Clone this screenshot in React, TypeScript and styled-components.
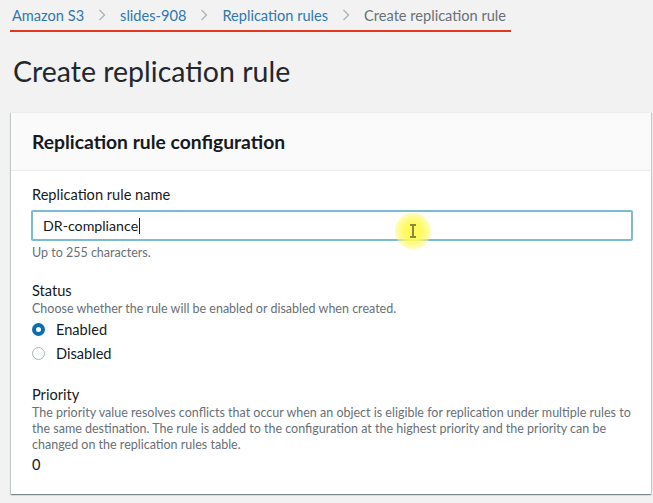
import React from "react";
import styled, { createGlobalStyle } from "styled-components";

const Global = createGlobalStyle`
  html, body { margin: 0; padding: 0; background: #f2f2f2; }
  body { font-family: Lato, "Liberation Sans", sans-serif; color: #16191f; }
  * { box-sizing: border-box; }
`;

const Page = styled.div`
  width: 653px;
  height: 503px;
  overflow: hidden;
  background: #f2f2f2;
  padding: 0 2px 0 11px;
  display: flex;
  flex-direction: column;
`;

const Crumbs = styled.nav`
  display: flex;
  align-items: center;
  height: 32px;
  padding: 0 0 0 2px;
  font-size: 14.6px;
  width: 501px;
  margin-left: -1px;
  border-bottom: 2px solid #e5361e;
`;

const CrumbLink = styled.span<{ $current?: boolean }>`
  flex-shrink: 0;
  color: ${(p) => (p.$current ? "#687078" : "#2f78b1")};
  white-space: nowrap;
`;

const Sep = styled.span`
  flex-shrink: 0;
  display: inline-flex;
  width: 36px;
  justify-content: center;
`;

const Title = styled.h1`
  margin: 22px 0 0 2px;
  font-size: 28.5px;
  font-weight: 400;
  color: #22272d;
  line-height: 34px;
`;

const Card = styled.section`
  margin-top: 24px;
  width: 640px;
  height: 382px;
  flex-shrink: 0;
  background: #fff;
  box-shadow: 0 1px 1px 0 rgba(0, 28, 36, 0.3), 1px 1px 1px 0 rgba(0, 28, 36, 0.15),
    -1px 1px 1px 0 rgba(0, 28, 36, 0.15);
  border-top: 1px solid #eaeded;
  display: flex;
  flex-direction: column;
`;

const CardHeader = styled.header`
  background: #fafafa;
  border-bottom: 1px solid #eaeded;
  height: 58px;
  flex-shrink: 0;
  padding: 0 0 0 21px;
  display: flex;
  align-items: center;
  font-size: 19.3px;
  font-weight: 700;
  color: #16191f;
`;

const CardBody = styled.div`
  padding: 14px 18px 0 21px;
  display: flex;
  flex-direction: column;
`;

const Field = styled.div<{ $gap?: number }>`
  display: flex;
  flex-direction: column;
  margin-bottom: ${(p) => p.$gap ?? 0}px;
`;

const Label = styled.div`
  font-size: 14.6px;
  line-height: 20px;
  color: #16191f;
`;

const Desc = styled.div`
  font-size: 12.5px;
  line-height: 16px;
  color: #687078;
`;

const InputBox = styled.div`
  position: relative;
  margin: 5px 0 0 -1px;
  height: 31px;
  border: 2px solid #7cbcd3;
  border-radius: 2px;
  padding: 0 10px;
  display: flex;
  align-items: center;
  font-size: 14.2px;
  color: #16191f;
  background: #fff;
`;

const Caret = styled.span`
  display: inline-block;
  width: 1px;
  height: 16px;
  background: #16191f;
  margin-left: 1px;
`;

const Highlight = styled.div`
  position: absolute;
  left: 362px;
  top: 1px;
  width: 36px;
  height: 36px;
  border-radius: 50%;
  background: radial-gradient(circle, rgba(255, 250, 90, 0.95) 35%, rgba(255, 250, 120, 0.5) 70%, rgba(255, 255, 160, 0) 100%);
  display: flex;
  align-items: center;
  justify-content: center;
`;

const Hint = styled(Desc)`
  margin-top: 4px;
`;

const RadioRow = styled.label`
  display: flex;
  align-items: center;
  gap: 11px;
  height: 24px;
  font-size: 14.6px;
  color: #16191f;
`;

const RadioDot = styled.span<{ $on?: boolean }>`
  width: 13px;
  height: 13px;
  border-radius: 50%;
  border: ${(p) => (p.$on ? "4px solid #0a6fb0" : "1.5px solid #aab7b8")};
  background: #fff;
`;

const Value = styled.div`
  margin-top: 2px;
  font-size: 14.6px;
  line-height: 20px;
  color: #16191f;
`;

const Chevron = () => (
  <svg width="8" height="12" viewBox="0 0 8 12">
    <path d="M1.5 1l5 5-5 5" fill="none" stroke="#aab7b8" strokeWidth="1.4" />
  </svg>
);

export default function App() {
  return (
    <>
      <Global />
      <Page>
        <Crumbs>
          <CrumbLink>Amazon S3</CrumbLink>
          <Sep>
            <Chevron />
          </Sep>
          <CrumbLink>slides-908</CrumbLink>
          <Sep>
            <Chevron />
          </Sep>
          <CrumbLink>Replication rules</CrumbLink>
          <Sep>
            <Chevron />
          </Sep>
          <CrumbLink $current>Create replication rule</CrumbLink>
        </Crumbs>
        <Title>Create replication rule</Title>
        <Card>
          <CardHeader>Replication rule configuration</CardHeader>
          <CardBody>
            <Field $gap={20}>
              <Label>Replication rule name</Label>
              <InputBox>
                DR-compliance
                <Caret />
                <Highlight>
                  <svg width="8" height="14" viewBox="0 0 8 14">
                    <path d="M1 1h6M4 1v12M1 13h6" fill="none" stroke="#8a8a3a" strokeWidth="2" />
                  </svg>
                </Highlight>
              </InputBox>
              <Hint>Up to 255 characters.</Hint>
            </Field>
            <Field $gap={20}>
              <Label>Status</Label>
              <Desc>Choose whether the rule will be enabled or disabled when created.</Desc>
              <RadioRow>
                <RadioDot $on />
                Enabled
              </RadioRow>
              <RadioRow>
                <RadioDot />
                Disabled
              </RadioRow>
            </Field>
            <Field>
              <Label>Priority</Label>
              <Desc>
                The priority value resolves conflicts that occur when an object is eligible for replication under
                multiple rules to the same destination. The rule is added to the configuration at the highest
                priority and the priority can be changed on the replication rules table.
              </Desc>
              <Value>0</Value>
            </Field>
          </CardBody>
        </Card>
      </Page>
    </>
  );
}
